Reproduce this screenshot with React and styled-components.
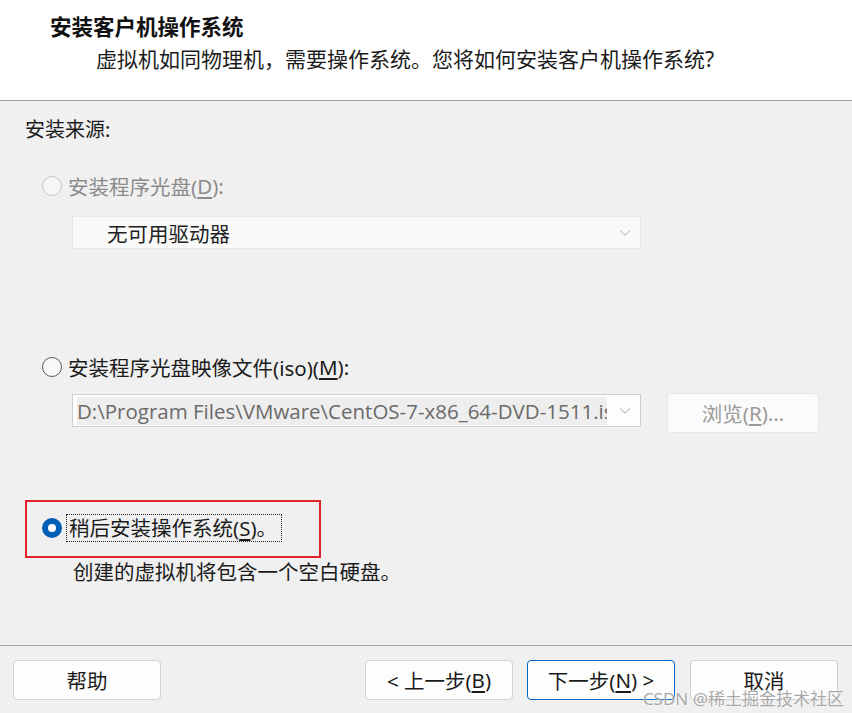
import React from "react";
import styled, { createGlobalStyle, css } from "styled-components";

const Global = createGlobalStyle`
  html, body { margin: 0; padding: 0; background: #f0f0f0; }
  body { font-family: "Noto Sans", "Noto Sans CJK SC", sans-serif; }
`;

const CJK = `"Noto Sans", "Noto Sans CJK SC", sans-serif`;

const Page = styled.div`
  position: relative;
  width: 852px;
  height: 713px;
  display: flex;
  flex-direction: column;
  overflow: hidden;
  font-family: ${CJK};
  color: #1b1b1b;
`;

const Header = styled.header`
  height: 101px;
  flex: none;
  background: #ffffff;
  border-bottom: 1px solid #a3a3a3;
  box-sizing: border-box;
  padding: 12px 0 0 50px;
`;

const Title = styled.div`
  font-size: 21.5px;
  font-weight: 700;
  line-height: 30px;
  color: #111;
`;

const Subtitle = styled.div`
  font-size: 21px;
  line-height: 30px;
  margin: 2px 0 0 46px;
  color: #1b1b1b;
`;

const Body = styled.main`
  flex: 1;
  background: #f0f0f0;
  padding: 15px 0 0 25px;
  display: flex;
  flex-direction: column;
  align-items: flex-start;
`;

const SectionLabel = styled.div`
  font-size: 20px;
  line-height: 28px;
`;

const RadioRow = styled.label`
  display: flex;
  align-items: center;
  height: 28px;
  margin-top: ${(p) => p.$mt || 0}px;
  margin-left: ${(p) => p.$ml ?? 17}px;
  font-size: 20.5px;
  white-space: nowrap;
  color: ${(p) => (p.$disabled ? "#8b8b8b" : "#1b1b1b")};
`;

const RadioDot = styled.span`
  width: 20px;
  height: 20px;
  box-sizing: border-box;
  border-radius: 50%;
  flex: none;
  margin-right: 6px;
  ${(p) =>
    p.$checked
      ? css`
          background: #005fb8;
          display: flex;
          align-items: center;
          justify-content: center;
          &::after {
            content: "";
            width: 8px;
            height: 8px;
            border-radius: 50%;
            background: #fff;
          }
        `
      : css`
          background: ${p.$disabled ? "#f6f6f6" : "#f8f8f8"};
          border: 1px solid ${p.$disabled ? "#c2c2c2" : "#5a5a5a"};
        `}
`;

const FocusText = styled.span`
  outline: 1px dotted #222;
  outline-offset: 1px;
  padding: 0 3px 0 1px;
  line-height: 24px;
`;

const U = styled.span`
  text-decoration: underline;
  text-underline-offset: 3px;
`;

const Select = styled.div`
  margin: ${(p) => p.$mt || 0}px 0 0 47px;
  width: 569px;
  height: ${(p) => p.$h}px;
  box-sizing: border-box;
  display: flex;
  align-items: center;
  background: ${(p) => (p.$disabled ? "#f9f9f9" : "#fdfdfd")};
  border: 1px solid ${(p) => (p.$disabled ? "#e8e8e8" : "#cfcfcf")};
`;

const SelectText = styled.span`
  flex: 1;
  overflow: hidden;
  white-space: nowrap;
  font-size: ${(p) => p.$fs || 20.5}px;
  color: ${(p) => p.$color};
  padding-left: ${(p) => p.$pl}px;
  font-family: ${(p) => (p.$latin ? `"Open Sans", "Noto Sans CJK SC", sans-serif` : CJK)};
`;

const Highlight = styled.span`
  background: #eeeeee;
`;

const Chevron = styled.svg`
  flex: none;
  width: 12px;
  height: 8px;
  margin: 0 9px 0 12px;
`;

const ComboRow = styled.div`
  display: flex;
  align-items: flex-start;
  margin-top: 12px;
`;

const Browse = styled.div`
  margin-left: 26px;
  width: 152px;
  height: 40px;
  box-sizing: border-box;
  border: 1px solid #e6e6e6;
  border-radius: 4px;
  background: #fbfbfb;
  display: flex;
  align-items: center;
  justify-content: center;
  font-size: 20.5px;
  color: #9a9a9a;
`;

const RedBox = styled.div`
  margin-top: 67px;
  width: 296px;
  height: 58px;
  box-sizing: border-box;
  border: 2px solid #e0222c;
  padding-top: 12px;
`;

const Desc = styled.div`
  margin-left: 48px;
  font-size: 20.5px;
  line-height: 28px;
`;

const Footer = styled.footer`
  flex: none;
  height: 68px;
  box-sizing: border-box;
  border-top: 1px solid #a3a3a3;
  background: #f0f0f0;
  padding: 14px 0 0 13px;
  display: flex;
  align-items: flex-start;
`;

const Button = styled.div`
  width: 148px;
  height: 40px;
  box-sizing: border-box;
  margin-left: ${(p) => p.$ml || 0}px;
  border: 1px solid ${(p) => (p.$primary ? "#0067c0" : "#d0d0d0")};
  border-radius: 4px;
  background: #fdfdfd;
  display: flex;
  align-items: center;
  justify-content: center;
  font-size: 20.5px;
  white-space: nowrap;
  color: #1b1b1b;
`;

const Watermark = styled.div`
  position: absolute;
  right: 8px;
  bottom: 3px;
  font-size: 17px;
  color: rgba(140, 140, 140, 0.75);
  text-shadow: 0 0 2px #fff;
  font-family: ${CJK};
  pointer-events: none;
`;

const Arrow = ({ color }) => (
  <Chevron viewBox="0 0 12 8">
    <path d="M1 1.5 L6 6 L11 1.5" fill="none" stroke={color} strokeWidth="1" />
  </Chevron>
);

export default function App() {
  return (
    <Page>
      <Global />
      <Header>
        <Title>安装客户机操作系统</Title>
        <Subtitle>虚拟机如同物理机，需要操作系统。您将如何安装客户机操作系统?</Subtitle>
      </Header>
      <Body>
        <SectionLabel>安装来源:</SectionLabel>
        <RadioRow $mt={28} $disabled>
          <RadioDot $disabled />
          安装程序光盘(<U>D</U>):
        </RadioRow>
        <Select $mt={16} $h={33} $disabled>
          <SelectText $pl={34} $color="#222">无可用驱动器</SelectText>
          <Arrow color="#b0b0b0" />
        </Select>
        <RadioRow $mt={104}>
          <RadioDot />
          安装程序光盘映像文件(iso)(<U>M</U>):
        </RadioRow>
        <ComboRow>
          <Select $mt={1} $h={33}>
            <SelectText $pl={4} $color="#6a6a6a" $fs={20.5} $latin>
              <Highlight>D:\Program Files\VMware\CentOS-7-x86_64-DVD-1511.iso</Highlight>
            </SelectText>
            <Arrow color="#a8a8a8" />
          </Select>
          <Browse>
            浏览(<U>R</U>)...
          </Browse>
        </ComboRow>
        <RedBox>
          <RadioRow $ml={15}>
            <RadioDot $checked />
            <FocusText>
              稍后安装操作系统(<U>S</U>)。
            </FocusText>
          </RadioRow>
        </RedBox>
        <Desc>创建的虚拟机将包含一个空白硬盘。</Desc>
      </Body>
      <Footer>
        <Button>帮助</Button>
        <Button $ml={204}>
          &lt; 上一步(<U>B</U>)
        </Button>
        <Button $ml={14} $primary>
          下一步(<U>N</U>) &gt;
        </Button>
        <Button $ml={15}>取消</Button>
      </Footer>
      <Watermark>CSDN @稀土掘金技术社区</Watermark>
    </Page>
  );
}
